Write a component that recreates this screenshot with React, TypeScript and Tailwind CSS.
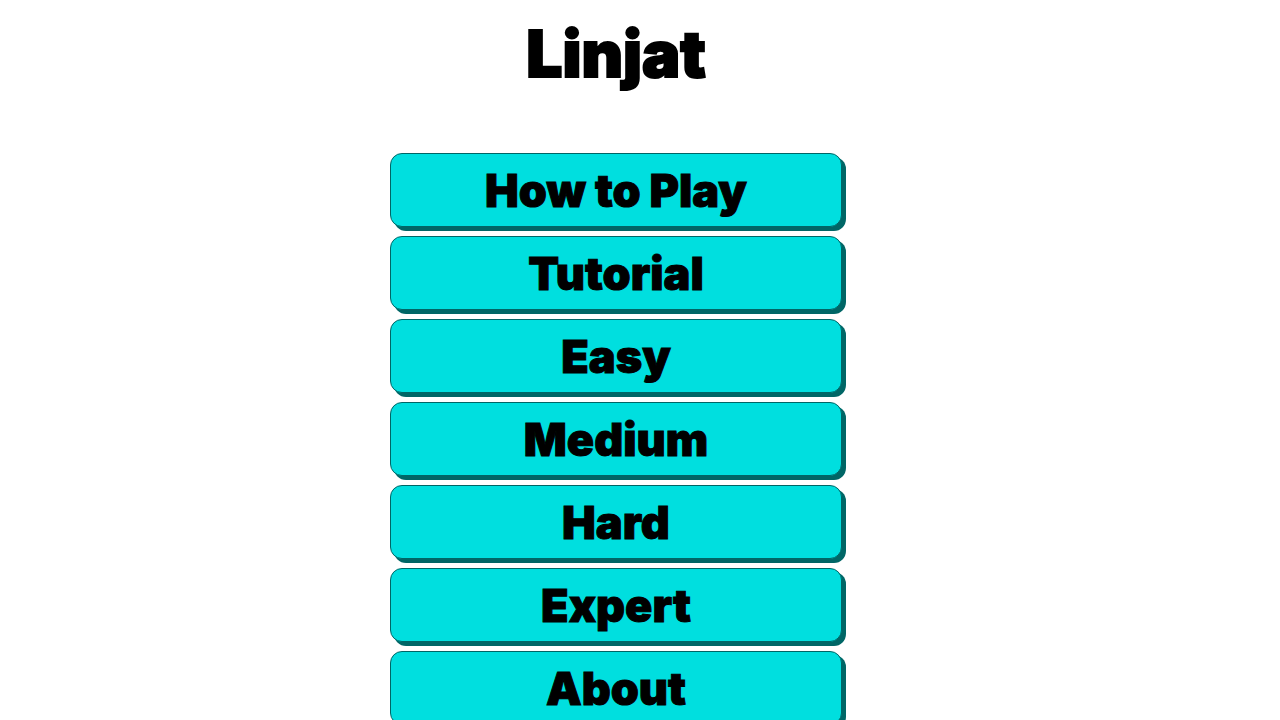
import React from 'react';

const App = () => {
  const menuItems = ['How to Play', 'Tutorial', 'Easy', 'Medium', 'Hard', 'Expert', 'About'];

  return (
    <main className="bg-white pr-12 pb-4 font-['Inter',sans-serif] font-black text-black">
      <h1 className="pt-4 text-center text-[64px] leading-[76px] [-webkit-text-stroke:2px_black]">
        Linjat
      </h1>

      <nav aria-label="Main menu" className="mx-auto mt-[61px] flex w-full max-w-[452px] flex-col gap-[9px]">
        {menuItems.map((item) => (
          <button
            key={item}
            type="button"
            className="w-full cursor-pointer rounded-xl border border-[#006666] bg-[#00dfdf] pt-px text-center text-[45px] leading-[71px] shadow-[4px_4px_0_#006666] [-webkit-text-stroke:1px_black]"
          >
            {item}
          </button>
        ))}
      </nav>
    </main>
  );
};

export default App;
